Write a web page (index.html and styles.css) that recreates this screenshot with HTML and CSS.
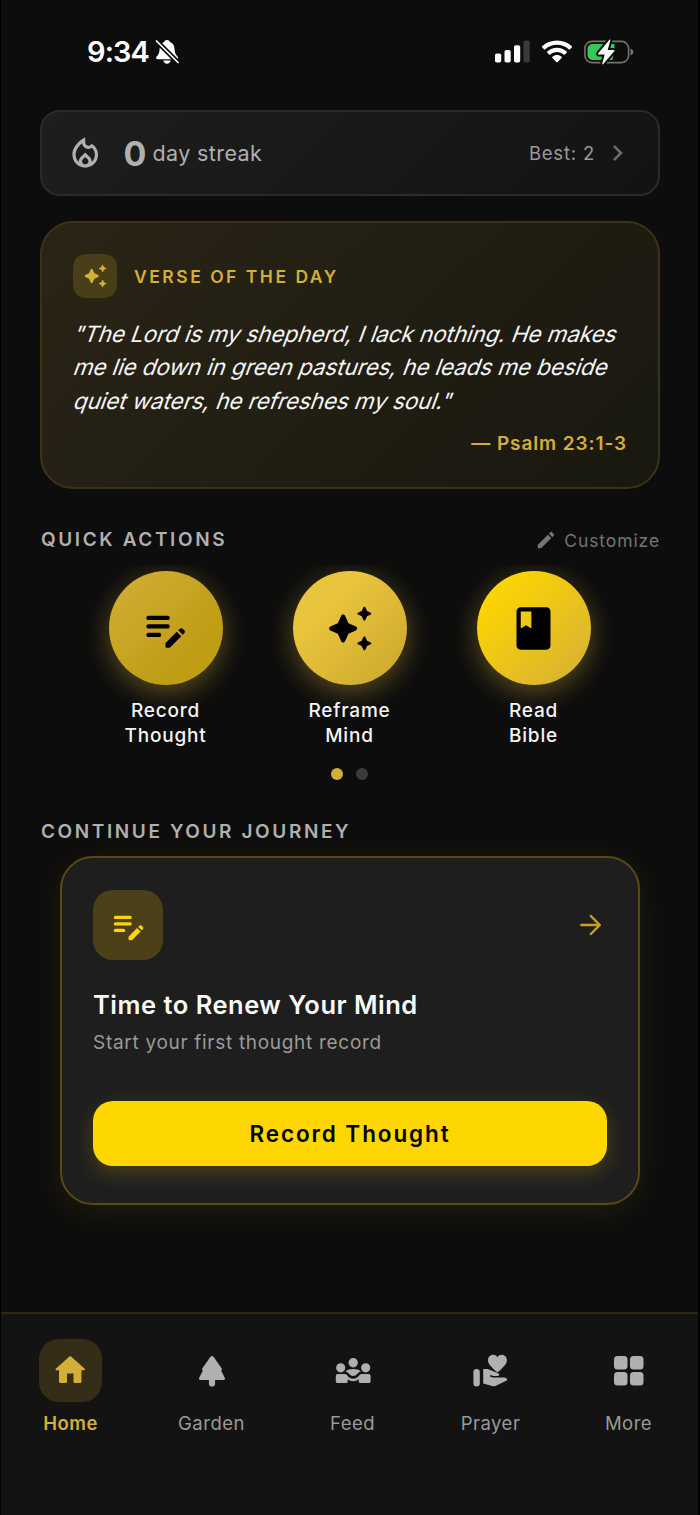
FILE: index.html
```
<!DOCTYPE html>
<html lang="en">
<head>
    <meta charset="UTF-8">
    <meta name="viewport" content="width=device-width, initial-scale=1.0">
    <title>Home</title>
    <link rel="stylesheet" href="styles.css">
</head>
<body>
    <svg class="defs" width="0" height="0">
        <symbol id="sparkle" viewBox="0 0 24 24"><path d="M19.46 8l.79-1.75L22 5.46c.39-.18.39-.73 0-.91l-1.75-.79L19.46 2c-.18-.39-.73-.39-.91 0l-.79 1.75-1.76.79c-.39.18-.39.73 0 .91l1.75.79.79 1.76c.18.39.74.39.92 0zM11.5 9.5L9.91 6c-.35-.78-1.47-.78-1.82 0L6.5 9.5 3 11.09c-.78.36-.78 1.47 0 1.82l3.5 1.59L8.09 18c.36.78 1.47.78 1.82 0l1.59-3.5 3.5-1.59c.78-.36.78-1.47 0-1.82L11.5 9.5zm7.04 6.5l-.79 1.75-1.75.79c-.39.18-.39.73 0 .91l1.75.79.79 1.76c.18.39.73.39.91 0l.79-1.75 1.76-.79c.39-.18.39-.73 0-.91l-1.75-.79-.79-1.76c-.18-.39-.74-.39-.92 0z"/></symbol>
        <symbol id="note" viewBox="0 0 24 24"><path d="M14 11c0 .55-.45 1-1 1H4c-.55 0-1-.45-1-1s.45-1 1-1h9c.55 0 1 .45 1 1zM3 7c0 .55.45 1 1 1h9c.55 0 1-.45 1-1s-.45-1-1-1H4c-.55 0-1 .45-1 1zm7 8c0-.55-.45-1-1-1H4c-.55 0-1 .45-1 1s.45 1 1 1h5c.55 0 1-.45 1-1zm8.01-2.13l.71-.71c.39-.39 1.02-.39 1.41 0l.71.71c.39.39.39 1.02 0 1.41l-.71.71-2.12-2.12zm-.71.71l-5.16 5.16c-.09.09-.14.21-.14.35v1.41c0 .28.22.5.5.5h1.41c.13 0 .26-.05.35-.15l5.16-5.16-2.12-2.11z"/></symbol>
    </svg>
    <div class="app">
        <header class="status-bar">
            <div class="clock">
                <span>9:34</span>
                <svg width="24" height="26" viewBox="0 0 24 26">
                    <path fill="#fff" d="M12 1c-1.600 0-2.600.9-2.900 2.100C6 4.200 4.800 6.900 4.600 10c-.2 4-1 5.600-3 7.600-1 1-.6 2.600 1 2.600h19c1.600 0 1.800-1.500 1-2.500-2-2.300-2.900-3.800-3.100-7.700-.2-3.300-1.600-5.900-4.600-6.900C14.600 1.900 13.600 1 12 1zM8.300 21.600h7.400c-.3 2-1.800 3.200-3.700 3.200s-3.400-1.200-3.700-3.200z"/>
                    <path stroke="#0d0d0d" stroke-width="5" d="M0 .5l25 25"/>
                    <path stroke="#fff" stroke-width="1.700" stroke-linecap="round" d="M1.500 2l21.500 21.500"/>
                </svg>
            </div>
            <div class="indicators">
                <svg width="36" height="23" viewBox="0 0 36 23" fill="#fff">
                    <rect x="0" y="13.500" width="6.200" height="9" rx="1.800"/>
                    <rect x="9.500" y="10" width="6.200" height="12.500" rx="1.800"/>
                    <rect x="19" y="5.300" width="6.200" height="17.200" rx="1.800"/>
                    <rect x="28.500" y="0.500" width="6.200" height="22" rx="1.800" fill="#3a3a38"/>
                </svg>
                <svg class="wifi" width="32" height="23" viewBox="0 0 32 23" fill="#fff">
                    <path d="M16 .5C10.200.5 5 2.700 1.200 6.200c-.4.4-.4.8 0 1.200l1.900 1.900c.4.4.8.4 1.200 0C7.400 6.400 11.500 4.800 16 4.800s8.600 1.600 11.700 4.500c.4.4.8.4 1.200 0l1.900-1.900c.4-.4.400-.8 0-1.200C27 2.700 21.800.5 16 .5z"/>
                    <path d="M16 7.800c-3.700 0-7.100 1.400-9.700 3.700-.4.400-.4.800 0 1.200l1.900 1.900c.4.400.8.400 1.200 0 1.800-1.600 4.100-2.500 6.600-2.500s4.800.9 6.600 2.500c.4.4.8.4 1.200 0l1.900-1.900c.4-.4.4-.8 0-1.200C23.100 9.200 19.700 7.800 16 7.800z"/>
                    <path d="M16 15.100c-1.700 0-3.300.6-4.500 1.600-.5.4-.4.9 0 1.300l3.800 3.900c.5.5.9.5 1.400 0l3.800-3.900c.4-.4.5-.9 0-1.300-1.200-1-2.800-1.600-4.500-1.600z"/>
                </svg>
                <svg class="battery" width="50" height="26" viewBox="0 0 50 26">
                    <rect x=".9" y="2.400" width="43.700" height="21.200" rx="7" fill="none" stroke="#72726e" stroke-width="1.600"/>
                    <path fill="#72726e" d="M46.500 9.500c1.900.7 2.900 2 2.900 3.500s-1 2.800-2.900 3.500z"/>
                    <path fill="#34c759" d="M8.500 5h22v3.500l-2 12.500h-20a5 5 0 0 1-5-5v-6a5 5 0 0 1 5-5z"/>
                    <path fill="#fff" stroke="#0d0d0d" stroke-width="4" paint-order="stroke" d="M25.200.9L14.300 14.200c-.5.700-.2 1.300.6 1.300h5.800L18.300 24.500c-.2.900.4 1.200 1 .5L30.200 12.200c.6-.7.3-1.300-.6-1.300H23.700L26.300 1.600C26.600.7 25.800.2 25.200.9z"/>
                </svg>
            </div>
        </header>

        <main class="content">
            <section class="streak">
                <svg class="flame" width="38.500" height="38.500" viewBox="0 0 24 24"><path d="M16 6l-.44.55c-.42.52-.98.75-1.54.75C13 7.3 12 6.52 12 5.3V2S4 6 4 13c0 4.420 3.580 8 8 8s8-3.580 8-8c0-2.960-1.610-5.620-4-7zm-4 13c-1.100 0-2-.87-2-1.940 0-.51.2-.99.58-1.360l1.420-1.400 1.430 1.400c.37.37.57.85.57 1.360 0 1.070-.9 1.940-2 1.940zm3.960-1.500c.04-.36.22-1.890-1.130-3.220L12 11.500l-2.830 2.780C7.810 15.620 8 17.160 8.040 17.500 6.790 16.400 6 14.790 6 13c0-3.160 2.130-5.650 4.030-7.250.23 1.990 1.930 3.550 3.990 3.550.78 0 1.540-.23 2.180-.66C17.340 9.780 18 11.350 18 13c0 1.790-.79 3.400-2.040 4.500z"/></svg>
                <span class="streak-count">0</span>
                <span class="streak-label">day streak</span>
                <span class="streak-best">Best: 2</span>
                <svg class="chevron" width="10" height="16" viewBox="0 0 10 16"><path d="M1.600 1.600L8 8l-6.400 6.400"/></svg>
            </section>

            <section class="verse">
                <div class="verse-head">
                    <div class="verse-badge"><svg width="26" height="26"><use href="#sparkle"/></svg></div>
                    <h2>VERSE OF THE DAY</h2>
                </div>
                <p class="verse-text">
                    <span>"The Lord is my shepherd, I lack nothing. He makes</span>
                    <span>me lie down in green pastures, he leads me beside</span>
                    <span>quiet waters, he refreshes my soul."</span>
                </p>
                <p class="verse-ref">— Psalm 23:1-3</p>
            </section>

            <div class="section-head">
                <h3 class="quick-title">QUICK ACTIONS</h3>
                <div class="customize">
                    <svg width="22" height="22" viewBox="0 0 24 24"><path d="M3 17.460v3.040c0 .28.22.5.5.5h3.040c.13 0 .26-.05.35-.15L17.810 9.940l-3.750-3.750L3.150 17.100c-.1.1-.15.22-.15.36zM20.710 7.040c.39-.39.39-1.020 0-1.410l-2.340-2.340c-.39-.39-1.020-.39-1.410 0l-1.830 1.830 3.750 3.750 1.830-1.830z"/></svg>
                    <span>Customize</span>
                </div>
            </div>

            <div class="actions">
                <div class="action">
                    <div class="circle record"><svg width="51" height="51"><use href="#note"/></svg></div>
                    <span>Record<br>Thought</span>
                </div>
                <div class="action">
                    <div class="circle reframe"><svg width="51" height="51"><use href="#sparkle"/></svg></div>
                    <span>Reframe<br>Mind</span>
                </div>
                <div class="action">
                    <div class="circle read"><svg width="51" height="51" viewBox="0 0 24 24"><path d="M18 2H6c-1.100 0-2 .9-2 2v16c0 1.100.9 2 2 2h12c1.100 0 2-.9 2-2V4c0-1.100-.9-2-2-2zM6 4h5v8l-2.500-1.500L6 12V4z"/></svg></div>
                    <span>Read<br>Bible</span>
                </div>
            </div>
            <div class="dots"><i class="active"></i><i></i></div>

            <h3 class="journey-title">CONTINUE YOUR JOURNEY</h3>
            <section class="journey">
                <div class="journey-top">
                    <div class="journey-badge"><svg width="39" height="39"><use href="#note"/></svg></div>
                    <svg class="arrow" width="22" height="22" viewBox="0 0 22 22"><path d="M1.300 11h18M10.800 2l9 9-9 9"/></svg>
                </div>
                <h2>Time to Renew Your Mind</h2>
                <p>Start your first thought record</p>
                <button class="btn">Record Thought</button>
            </section>
        </main>

        <nav class="tabs">
            <a class="tab active">
                <div class="tab-icon"><svg width="38.500" height="38.500" viewBox="0 0 24 24"><path d="M10 19v-5h4v5c0 .55.45 1 1 1h3c.55 0 1-.45 1-1v-7h1.700c.46 0 .68-.57.33-.87L12.670 3.600c-.38-.34-.96-.34-1.340 0l-8.360 7.530c-.34.3-.13.87.33.87H5v7c0 .55.45 1 1 1h3c.55 0 1-.45 1-1z"/></svg></div>
                <span>Home</span>
            </a>
            <a class="tab garden">
                <div class="tab-icon"><svg width="38" height="38" viewBox="0 0 38 38"><path d="M17.600 4.600c.7-.9 2.100-.9 2.800 0l8.300 11.900c.7 1-.1 1.900-.6 1.900l3.700 7.400c.8 1.300-.2 2.200-1.300 2.200h-8.400v3.400a3.100 3.100 0 0 1-6.200 0V28H7.500c-1.200 0-2.100-1-1.300-2.200l3.700-7.400c-.5 0-1.300-1-.6-1.900z"/></svg></div>
                <span>Garden</span>
            </a>
            <a class="tab feed">
                <div class="tab-icon"><svg width="38" height="38" viewBox="0 0 38 38">
                    <circle cx="6.700" cy="15.800" r="4.600"/><circle cx="19.200" cy="10.800" r="4.700"/><circle cx="31.700" cy="15.800" r="4.600"/>
                    <path d="M11.300 19.500c1.600-1.700 4.600-2.500 7.900-2.500s6.300.8 7.900 2.500c-2 .2-3 1.300-4 2.600-1.800 2.500-6 2.500-7.800 0-1-1.300-2-2.400-4-2.600z"/>
                    <path d="M4 21.900h6.500c1.700 0 2.400.8 3.200 2 2.500 3.700 8.500 3.700 11 0 .8-1.200 1.500-2 3.200-2h6.500c1.400 0 2.200.8 2.200 2.200v5.100c0 1.200-.8 1.900-1.900 1.900h-8.100c-1.200 0-1.900-.8-1.900-1.900v-1.900c-3.200 2.500-7.800 2.500-11 0v1.900c0 1.200-.8 1.900-1.900 1.900H3.700c-1.200 0-1.900-.8-1.900-1.900v-5.100c0-1.400.8-2.200 2.200-2.200z"/>
                </svg></div>
                <span>Feed</span>
            </a>
            <a class="tab">
                <div class="tab-icon"><svg width="38" height="38" viewBox="0 0 38 38">
                    <path d="M25.300 20c-.6 0-1-.3-1.400-.7-4.500-4.400-7.900-7.200-7.900-11C16 5.100 18.300 2.800 21 2.800c1.700 0 3.300.8 4.400 2.200 1.100-1.400 2.700-2.200 4.400-2.200 2.700 0 5.100 2.300 5.100 5.500 0 3.800-3.400 6.600-7.900 11-.5.4-1 .7-1.700.7z"/>
                    <rect x="1.400" y="17" width="6.400" height="17.500" rx="3.200"/>
                    <path d="M11.200 17h3.500c.5 0 1 .1 1.500.3l9.500 3.600c1.500.6 1.700 2 .8 3.100h-5.300l-2.800-1.100-.5 1.500 3 1.200h11.400c1.600 0 2.900 1.200 2.900 2.600L22.900 34.200c-.7.2-1.300.2-2 0L11.200 31.500z"/>
                </svg></div>
                <span>Prayer</span>
            </a>
            <a class="tab">
                <div class="tab-icon"><svg width="38" height="38" viewBox="0 0 38 38"><rect x="4" y="4" width="13.500" height="13.500" rx="3.500"/><rect x="20" y="4" width="13.500" height="13.500" rx="3.500"/><rect x="4" y="20" width="13.500" height="13.500" rx="3.500"/><rect x="20" y="20" width="13.500" height="13.500" rx="3.500"/></svg></div>
                <span>More</span>
            </a>
        </nav>
    </div>
</body>
</html>
```
FILE: styles.css
```
* { margin: 0; padding: 0; box-sizing: border-box; }
body {
    font-family: Inter, "Liberation Sans", sans-serif;
    background: #000;
    color: #fff;
}
svg { display: block; flex: none; fill: currentColor; }
.defs { position: absolute; }
span, h2, h3 { white-space: nowrap; }
.app {
    display: flex;
    flex-direction: column;
    height: 1515px;
    margin: 0 2px 0 1px;
    background: #0d0d0d;
}

/* Status bar */
.status-bar {
    display: flex;
    justify-content: space-between;
    height: 110px;
    padding: 36px 64px 0 86px;
}
.clock {
    display: flex;
    align-items: center;
    gap: 6px;
    height: 31px;
    font-size: 29px;
    font-weight: 600;
    letter-spacing: -0.9px;
}
.indicators {
    display: flex;
    align-items: center;
    height: 31px;
}
.wifi { margin-left: 10px; }
.battery { margin-left: 11px; overflow: visible; }

.content {
    flex: 1;
    padding: 0 38px 0 39px;
}

/* Streak */
.streak {
    display: flex;
    align-items: center;
    height: 86px;
    padding: 0 35px 0 24px;
    border: 2px solid #2a2a26;
    border-radius: 20px;
    background: linear-gradient(135deg, #1e1e1e, #131313);
    color: #b0b0ae;
}
.streak-count {
    margin-left: 19px;
    font-size: 34px;
    font-weight: 700;
}
.streak-label {
    margin-left: 6px;
    font-size: 21.5px;
    letter-spacing: 0.4px;
}
.streak-best {
    margin-left: auto;
    font-size: 18.5px;
    letter-spacing: 0.8px;
    color: #9a9a98;
}
.chevron {
    margin-left: 18px;
    fill: none;
    stroke: #6c6c68;
    stroke-width: 2.6;
    stroke-linecap: round;
}

/* Verse */
.verse {
    height: 268px;
    margin-top: 25px;
    padding: 31px;
    border: 2px solid #3c3317;
    border-radius: 33px;
    background: linear-gradient(135deg, #2b2416, #211e13 50%, #19180f);
}
.verse-head {
    display: flex;
    align-items: center;
    gap: 17px;
}
.verse-badge {
    display: flex;
    align-items: center;
    justify-content: center;
    width: 44px;
    height: 44px;
    border-radius: 13px;
    background: #483e18;
    color: #d4af37;
}
.verse-head h2 {
    font-size: 17.5px;
    font-weight: 600;
    letter-spacing: 2.5px;
    color: #d4af37;
}
.verse-text {
    display: flex;
    flex-direction: column;
    align-items: flex-start;
    margin-top: 19px;
    font-size: 22.5px;
    line-height: 33.3px;
    letter-spacing: -0.1px;
    color: #f5f5f5;
}
/* steeper slant than the font's own italic */
.verse-text span {
    margin-left: -1px;
    transform: skewX(-20deg);
    transform-origin: 0 75%;
}
.verse-ref {
    text-align: right;
    margin-top: 15px;
    font-size: 19px;
    font-weight: 600;
    line-height: 24px;
    letter-spacing: 0.9px;
    color: #d4af37;
}

/* Quick actions */
.section-head {
    display: flex;
    align-items: center;
    justify-content: space-between;
    height: 24px;
    margin-top: 39px;
}
h3 {
    padding-left: 1px;
    font-size: 19px;
    font-weight: 600;
    line-height: 24px;
    letter-spacing: 2.6px;
    color: #b0b0ae;
}
.customize {
    display: flex;
    align-items: center;
    gap: 7px;
    font-size: 17.5px;
    letter-spacing: 0.9px;
    color: #757572;
}
.actions {
    display: flex;
    justify-content: center;
    gap: 70px;
    height: 190px;
    margin-top: 13px;
    padding: 6px 1px 0 0;
    overflow: hidden;
}
.action {
    display: flex;
    flex-direction: column;
    align-items: center;
    width: 114px;
    font-size: 19px;
    font-weight: 500;
    line-height: 25px;
    letter-spacing: 0.8px;
    text-align: center;
    color: #f5f5f5;
}
.action span { margin-top: 13px; }
.circle {
    display: flex;
    align-items: center;
    justify-content: center;
    width: 114px;
    height: 114px;
    border-radius: 50%;
    color: #000;
    box-shadow: 0 7px 26px rgba(212, 175, 55, 0.4);
}
.record { background: linear-gradient(135deg, #d4af37, #bf9d15 70%); }
.reframe { background: linear-gradient(135deg, #e8c53c 30%, #cba62c); }
.read { background: linear-gradient(135deg, #ffd700 10%, #d4af37); }
.dots {
    display: flex;
    justify-content: center;
    gap: 13px;
    margin-top: 13px;
    padding-right: 1px;
}
.dots i {
    width: 12px;
    height: 12px;
    border-radius: 50%;
    background: #3a3a38;
}
.dots .active { background: #d4af37; }

/* Journey card */
.journey-title { margin-top: 40px; }
.journey {
    height: 349px;
    margin: 12px 20px 0;
    padding: 32px 31px;
    border: 2px solid #584a10;
    border-radius: 33px;
    background: #1e1e1e;
    box-shadow: 0 7px 33px rgba(255, 215, 0, 0.08);
}
.journey-top {
    display: flex;
    align-items: center;
    justify-content: space-between;
    padding-right: 5px;
}
.journey-badge {
    display: flex;
    align-items: center;
    justify-content: center;
    width: 70px;
    height: 70px;
    border-radius: 20px;
    background: #4b4018;
    color: #ffd700;
}
.arrow {
    fill: none;
    stroke: #c9a21a;
    stroke-width: 2.4;
    stroke-linecap: round;
    stroke-linejoin: round;
}
.journey h2 {
    margin-top: 29px;
    font-size: 25.5px;
    font-weight: 600;
    line-height: 32px;
    letter-spacing: 0.5px;
    color: #f8f8f8;
}
.journey p {
    margin-top: 10px;
    font-size: 19px;
    line-height: 24px;
    letter-spacing: 0.7px;
    color: #9a9a98;
}
.btn {
    display: block;
    width: 100%;
    height: 65px;
    margin-top: 46px;
    border: none;
    border-radius: 20px;
    background: #ffd700;
    color: #000;
    font: 600 22.5px/64px Inter, "Liberation Sans", sans-serif;
    letter-spacing: 1.9px;
    box-shadow: 0 7px 20px rgba(255, 215, 0, 0.2);
}

/* Tab bar */
.tabs {
    display: flex;
    justify-content: space-between;
    height: 203px;
    padding: 25px 38px 0;
    border-top: 2px solid #2e2715;
    background: #131313;
}
.tab {
    display: flex;
    flex-direction: column;
    align-items: center;
    width: 63px;
    color: #b0b0ae;
}
.tab-icon {
    display: flex;
    align-items: center;
    justify-content: center;
    width: 63px;
    height: 63px;
    border-radius: 20px;
}
.tab span {
    margin-top: 9px;
    font-size: 18.5px;
    line-height: 24px;
    letter-spacing: 0.5px;
    color: #9a9a98;
}
.garden, .feed { padding-left: 3px; width: 66px; }
.tab.active { color: #d4af37; }
.tab.active .tab-icon { background: #352d18; }
.tab.active span { font-weight: 600; color: #d4af37; }
```
